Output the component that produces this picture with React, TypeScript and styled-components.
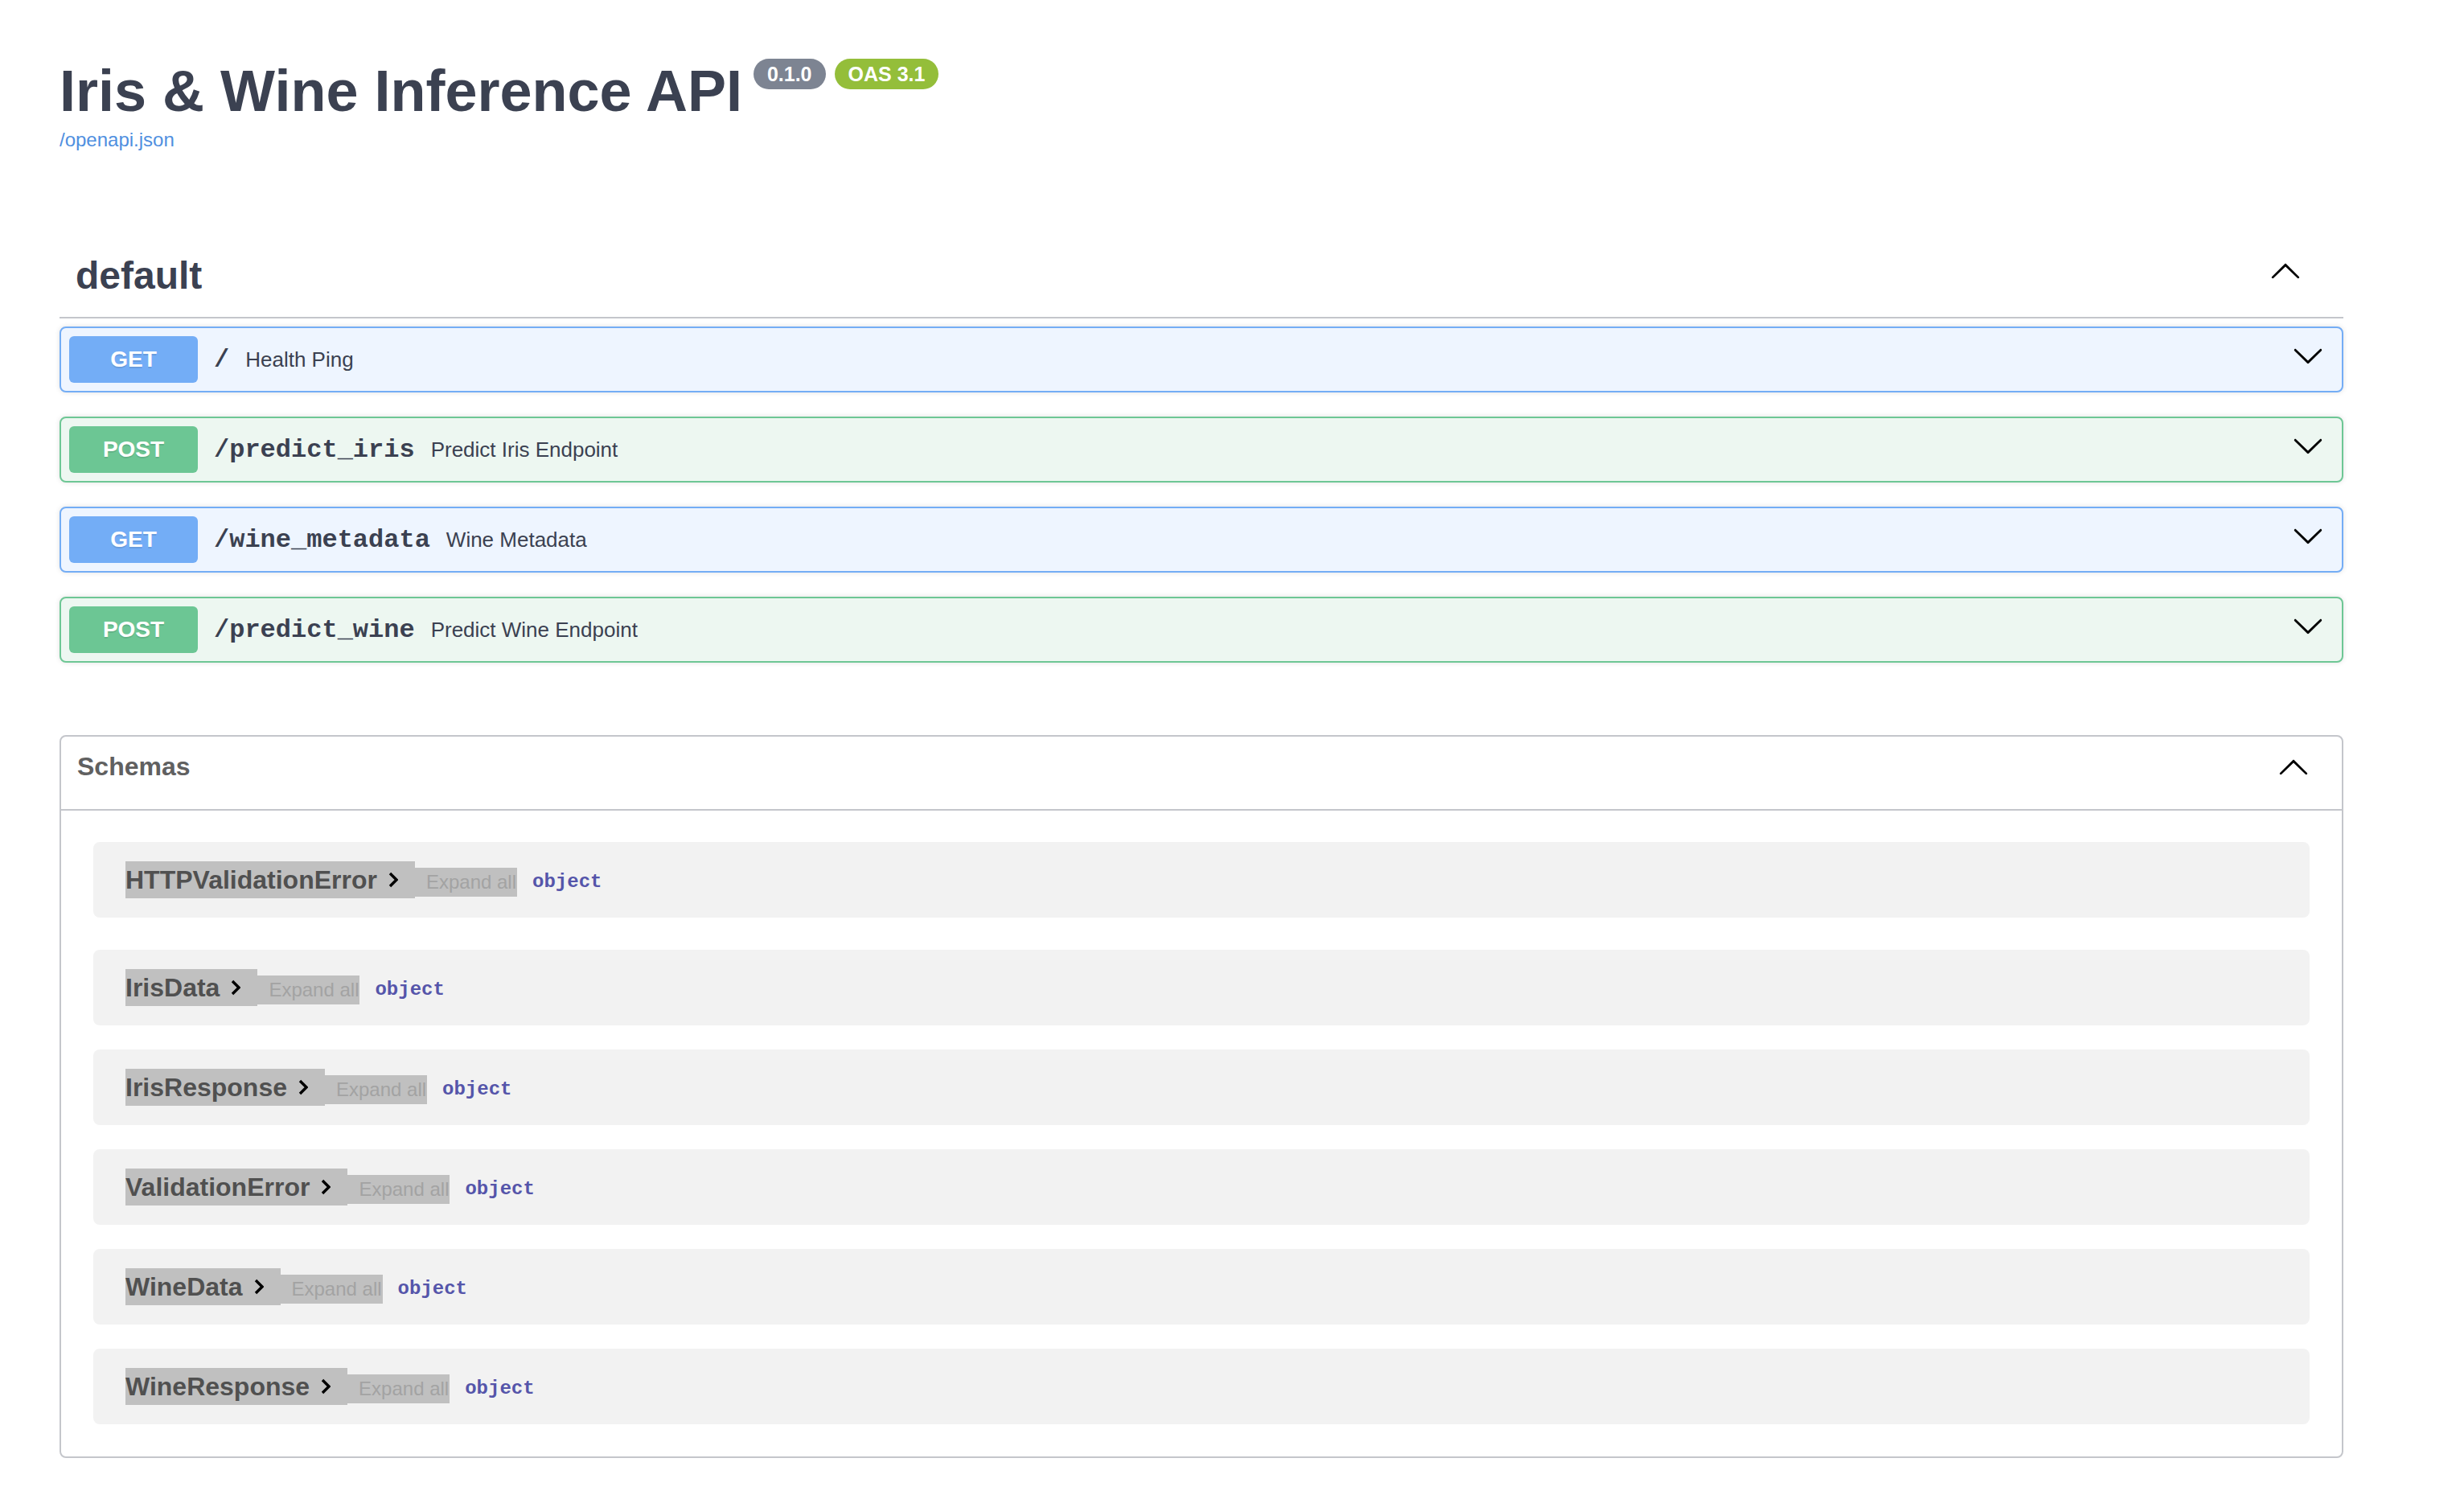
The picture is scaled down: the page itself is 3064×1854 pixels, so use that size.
import React from 'react';
import styled, { createGlobalStyle } from 'styled-components';

const GlobalStyle = createGlobalStyle`
  html, body { margin: 0; padding: 0; background: #ffffff; }
  body { font-family: "Liberation Sans", Arial, Helvetica, sans-serif; }
  * { box-sizing: border-box; }
`;

const Page = styled.div`
  width: 2914px;
  padding: 72px 0 0 74px;
`;

const Info = styled.header`
  display: flex;
  flex-direction: column;
`;

const TitleRow = styled.div`
  display: flex;
  align-items: flex-start;
`;

const Title = styled.h2`
  margin: 0;
  font-size: 72px;
  line-height: 83px;
  font-weight: 700;
  color: #3b4151;
`;

const BadgeGroup = styled.div`
  display: flex;
  gap: 11px;
  margin: 1px 0 0 14px;
`;

const Badge = styled.span<{ $bg: string }>`
  display: inline-flex;
  align-items: center;
  height: 38px;
  padding: 0 17px;
  border-radius: 57px;
  background: ${(p) => p.$bg};
  color: #ffffff;
  font-size: 25px;
  font-weight: 700;
`;

const SpecLink = styled.a`
  display: block;
  margin-top: 5px;
  font-size: 24px;
  line-height: 27px;
  color: #4f8fe0;
  text-decoration: none;
`;

const TagSection = styled.section`
  margin-top: 108px;
`;

const TagHeader = styled.div`
  display: flex;
  align-items: center;
  padding: 20px 52px 24px 20px;
  border-bottom: 2px solid #c4c6cb;
  margin-bottom: 10px;
`;

const TagTitle = styled.h3`
  flex: 1;
  margin: 0;
  font-size: 48px;
  line-height: 55px;
  font-weight: 700;
  color: #3b4151;
`;

const ArrowIcon = styled.svg<{ $lift: number }>`
  width: 40px;
  height: 40px;
  flex: none;
  margin-bottom: ${(p) => p.$lift}px;
`;

type Method = 'GET' | 'POST';

const palette: Record<Method, { badge: string; border: string; bg: string }> = {
  GET: { badge: '#73adf6', border: '#74adf5', bg: '#eef5ff' },
  POST: { badge: '#6cc694', border: '#6ec795', bg: '#edf7f1' },
};

const Operation = styled.div<{ $m: Method }>`
  border: 2px solid ${(p) => palette[p.$m].border};
  border-radius: 8px;
  background: ${(p) => palette[p.$m].bg};
  box-shadow: 0 0 6px rgba(0, 0, 0, 0.12);
  margin-bottom: 30px;
`;

const Summary = styled.div`
  display: flex;
  align-items: center;
  padding: 10px 22px 10px 10px;
`;

const MethodBadge = styled.span<{ $m: Method }>`
  min-width: 160px;
  padding: 12px 0;
  line-height: 34px;
  border-radius: 6px;
  background: ${(p) => palette[p.$m].badge};
  color: #ffffff;
  font-size: 28px;
  font-weight: 700;
  text-align: center;
  text-shadow: 0 2px 0 rgba(0, 0, 0, 0.1);
`;

const PathText = styled.span`
  padding: 0 20px;
  font-family: "Liberation Mono", "Courier New", monospace;
  font-size: 32px;
  font-weight: 700;
  color: #3b4151;
`;

const Description = styled.span`
  flex: 1;
  font-size: 26px;
  color: #3b4151;
`;

const Models = styled.section`
  margin-top: 90px;
  border: 2px solid #c4c6cb;
  border-radius: 8px;
`;

const ModelsHeader = styled.h4`
  display: flex;
  align-items: center;
  height: 92px;
  margin: 0;
  padding: 12px 40px 28px 20px;
  border-bottom: 2px solid #c4c6cb;
`;

const ModelsTitle = styled.span`
  flex: 1;
  font-size: 32px;
  line-height: 38px;
  font-weight: 700;
  color: #606060;
`;

const ModelList = styled.div`
  display: flex;
  flex-direction: column;
  gap: 30px;
  padding: 39px 40px 40px;
`;

const ModelContainer = styled.div<{ $first?: boolean }>`
  display: flex;
  align-items: flex-start;
  height: 94px;
  padding: 24px 40px 0;
  border-radius: 8px;
  background: #f2f2f2;
  margin-bottom: ${(p) => (p.$first ? 10 : 0)}px;
`;

const ModelTitle = styled.span`
  display: inline-flex;
  align-items: center;
  gap: 14px;
  height: 46px;
  padding-right: 21px;
  background: #c0c0c0;
  font-size: 32px;
  font-weight: 700;
  color: #505050;
`;

const ModelChevron = styled.svg`
  width: 12px;
  height: 20px;
  flex: none;
`;

const ExpandAll = styled.span`
  margin-top: 8px;
  height: 36px;
  line-height: 36px;
  padding: 0 1px 0 14px;
  background: #c0c0c0;
  font-size: 24px;
  color: #a3a3a3;
`;

const TypeLabel = styled.span`
  margin: 8px 0 0 19px;
  line-height: 36px;
  font-family: "Liberation Mono", "Courier New", monospace;
  font-size: 24px;
  font-weight: 700;
  color: #5555aa;
`;

const DOWN =
  'M17.418 6.109c.272-.268.709-.268.979 0s.271.701 0 .969l-7.908 7.83c-.27.268-.707.268-.979 0l-7.908-7.83c-.27-.268-.27-.701 0-.969.271-.268.709-.268.979 0L10 13.25l7.418-7.141z';
const UP =
  'M17.418 14.908c.272.268.709.268.979 0s.271-.701 0-.969l-7.908-7.83c-.27-.268-.707-.268-.979 0l-7.908 7.83c-.27.268-.27.701 0 .969.271.268.709.268.979 0L10 7.767l7.418 7.141z';

const Arrow = ({ dir, lift }: { dir: 'up' | 'down'; lift: number }) => (
  <ArrowIcon $lift={lift} viewBox="0 0 20 20" aria-hidden>
    <path d={dir === 'up' ? UP : DOWN} fill="#000" />
  </ArrowIcon>
);

const operations: { method: Method; path: string; summary: string }[] = [
  { method: 'GET', path: '/', summary: 'Health Ping' },
  { method: 'POST', path: '/predict_iris', summary: 'Predict Iris Endpoint' },
  { method: 'GET', path: '/wine_metadata', summary: 'Wine Metadata' },
  { method: 'POST', path: '/predict_wine', summary: 'Predict Wine Endpoint' },
];

const schemas = [
  'HTTPValidationError',
  'IrisData',
  'IrisResponse',
  'ValidationError',
  'WineData',
  'WineResponse',
];

export default function App() {
  return (
    <>
      <GlobalStyle />
      <Page>
        <Info>
          <TitleRow>
            <Title>Iris &amp; Wine Inference API</Title>
            <BadgeGroup>
              <Badge $bg="#7d8492">0.1.0</Badge>
              <Badge $bg="#94be3a">OAS 3.1</Badge>
            </BadgeGroup>
          </TitleRow>
          <SpecLink href="#">/openapi.json</SpecLink>
        </Info>

        <TagSection>
          <TagHeader>
            <TagTitle>default</TagTitle>
            <Arrow dir="up" lift={14} />
          </TagHeader>
          {operations.map((op) => (
            <Operation key={op.path} $m={op.method}>
              <Summary>
                <MethodBadge $m={op.method}>{op.method}</MethodBadge>
                <PathText>{op.path}</PathText>
                <Description>{op.summary}</Description>
                <Arrow dir="down" lift={10} />
              </Summary>
            </Operation>
          ))}
        </TagSection>

        <Models>
          <ModelsHeader>
            <ModelsTitle>Schemas</ModelsTitle>
            <Arrow dir="up" lift={0} />
          </ModelsHeader>
          <ModelList>
            {schemas.map((name, i) => (
              <ModelContainer key={name} $first={i === 0}>
                <ModelTitle>
                  {name}
                  <ModelChevron viewBox="0 0 12 20" aria-hidden>
                    <polyline
                      points="2,2 10,10 2,18"
                      fill="none"
                      stroke="#000"
                      strokeWidth="3.4"
                      strokeLinejoin="miter"
                    />
                  </ModelChevron>
                </ModelTitle>
                <ExpandAll>Expand all</ExpandAll>
                <TypeLabel>object</TypeLabel>
              </ModelContainer>
            ))}
          </ModelList>
        </Models>
      </Page>
    </>
  );
}
